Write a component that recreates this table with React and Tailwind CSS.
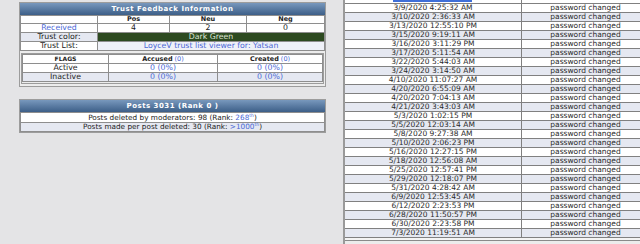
const logins = [
  "3/9/2020 4:25:32 AM",
  "3/10/2020 2:36:33 AM",
  "3/13/2020 12:55:10 PM",
  "3/15/2020 9:19:11 AM",
  "3/16/2020 3:11:29 PM",
  "3/17/2020 5:11:54 AM",
  "3/22/2020 5:44:03 AM",
  "3/24/2020 3:14:50 AM",
  "4/10/2020 11:07:27 AM",
  "4/20/2020 6:55:09 AM",
  "4/20/2020 7:04:13 AM",
  "4/21/2020 3:43:03 AM",
  "5/3/2020 1:02:15 PM",
  "5/5/2020 12:03:14 AM",
  "5/8/2020 9:27:38 AM",
  "5/10/2020 2:06:23 PM",
  "5/16/2020 12:27:15 PM",
  "5/18/2020 12:56:08 AM",
  "5/25/2020 12:57:41 PM",
  "5/29/2020 12:18:07 PM",
  "5/31/2020 4:28:42 AM",
  "6/9/2020 12:53:45 AM",
  "6/12/2020 2:23:53 PM",
  "6/28/2020 11:50:57 PM",
  "6/30/2020 2:23:58 PM",
  "7/3/2020 11:19:51 AM",
];

function Title({ children }) {
  return (
    <div className="h-[12px] bg-gradient-to-b from-[#7898bd] to-[#3d5f88] text-white font-bold text-[7px] tracking-[0.5px] leading-[12px] text-center">
      {children}
    </div>
  );
}

function Cell({ className = "", children }) {
  return (
    <div className={"flex items-center justify-center leading-none " + className}>
      {children}
    </div>
  );
}

function TrustPanel() {
  const alt = "bg-[#e5e8f1]";
  return (
    <div className="mt-[2px] border border-[#9c9c9c] bg-[#ececec]">
      <Title>Trust Feedback Information</Title>
      <div className="grid grid-cols-[76px_71px_76px_1fr] gap-px p-px bg-[#8e8e8e] text-[7.8px] text-[#222]">
        <Cell className="h-[7px] bg-white" />
        <Cell className="h-[7px] bg-white font-bold text-[6.5px]">Pos</Cell>
        <Cell className="h-[7px] bg-white font-bold text-[6.5px]">Neu</Cell>
        <Cell className="h-[7px] bg-white font-bold text-[6.5px]">Neg</Cell>

        <Cell className="h-[8px] bg-white text-[#4a68d6]">Received</Cell>
        <Cell className="h-[8px] bg-white">4</Cell>
        <Cell className="h-[8px] bg-white">2</Cell>
        <Cell className="h-[8px] bg-white">0</Cell>

        <Cell className={"h-[8px] " + alt}>Trust color:</Cell>
        <Cell className="h-[8px] col-span-3 bg-[#2d4a20] text-[#dfe6d8]">Dark Green</Cell>

        <Cell className="h-[8px] bg-white">Trust List:</Cell>
        <Cell className="h-[8px] col-span-3 bg-[#eff1f8] text-[#4a68d6]">
          LoyceV trust list viewer for: Yatsan
        </Cell>
      </div>
      <div className="mt-[2px] mb-[2px] mx-px border border-[#9c9c9c] bg-[#ececec] pb-px">
        <div className="grid grid-cols-[85px_108px_1fr] gap-px p-px bg-[#8e8e8e] text-[7.8px] text-[#222]">
          <Cell className="h-[8px] bg-white font-bold text-[6px]">FLAGS</Cell>
          <Cell className="h-[8px] bg-white text-[6.5px]">
            <span className="font-bold">Accused</span>
            <span className="ml-[2px] text-[#4a68d6]">(0)</span>
          </Cell>
          <Cell className="h-[8px] bg-white text-[6.5px]">
            <span className="font-bold">Created</span>
            <span className="ml-[2px] text-[#4a68d6]">(0)</span>
          </Cell>

          <Cell className="h-[8px] bg-white">Active</Cell>
          <Cell className="h-[8px] bg-white text-[#4a68d6]">0 (0%)</Cell>
          <Cell className="h-[8px] bg-white text-[#4a68d6]">0 (0%)</Cell>

          <Cell className={"h-[8px] " + alt}>Inactive</Cell>
          <Cell className={"h-[8px] text-[#4a68d6] " + alt}>0 (0%)</Cell>
          <Cell className={"h-[8px] text-[#4a68d6] " + alt}>0 (0%)</Cell>
        </div>
      </div>
    </div>
  );
}

function PostsPanel() {
  return (
    <div className="mt-[12px] border border-[#9c9c9c] bg-[#ececec]">
      <Title>Posts 3031 (Rank 0 )</Title>
      <div className="flex flex-col gap-px p-px bg-[#8e8e8e] text-[7.3px] text-[#222]">
        <Cell className="h-[9px] bg-white">
          Posts deleted by moderators: 98 (Rank:&nbsp;
          <span className="text-[#4a68d6]">268</span>
          <sup className="text-[4.5px] text-[#4a68d6] -top-[2px]">th</sup>)
        </Cell>
        <Cell className="h-[8px] bg-[#e5e8f1]">
          Posts made per post deleted: 30 (Rank:&nbsp;
          <span className="text-[#4a68d6]">&gt;1000</span>
          <sup className="text-[4.5px] text-[#4a68d6] -top-[2px]">th</sup>)
        </Cell>
      </div>
    </div>
  );
}

function LoginTable() {
  return (
    <div className="ml-[17px] w-[306px] shrink-0 border-l-2 border-[#9a9a9a] bg-[#ececec] text-[7.5px] text-[#2a2a2a]">
      <div className="h-[3px] bg-white grid grid-cols-[177px_1fr]">
        <div className="border-r border-[#808080]">
          <div className="ml-[48px] w-[79px] h-[2px] bg-[#3f6fd8]" />
        </div>
        <div />
      </div>
      {logins.map((t, i) => (
        <div
          key={i}
          className={
            "grid grid-cols-[177px_1fr] h-[9px] border-t border-[#808080] " +
            (i % 2 === 0 ? "bg-white" : "bg-[#e5e8f1]")
          }
        >
          <div className="border-r border-[#808080] text-center leading-[8px]">{t}</div>
          <div className="text-center leading-[8px]">password changed</div>
        </div>
      ))}
      <div className="h-px bg-[#808080]" />
      <div className="h-[2px] bg-[#f4f4f4]" />
      <div className="h-px bg-[#8a8a8a]" />
    </div>
  );
}

export default function App() {
  return (
    <div className="w-[640px] h-[244px] overflow-hidden bg-[#e4e4e6] flex font-['DejaVu_Sans',Verdana,sans-serif]">
      <div className="ml-[19px] w-[307px] shrink-0">
        <TrustPanel />
        <PostsPanel />
      </div>
      <LoginTable />
    </div>
  );
}
